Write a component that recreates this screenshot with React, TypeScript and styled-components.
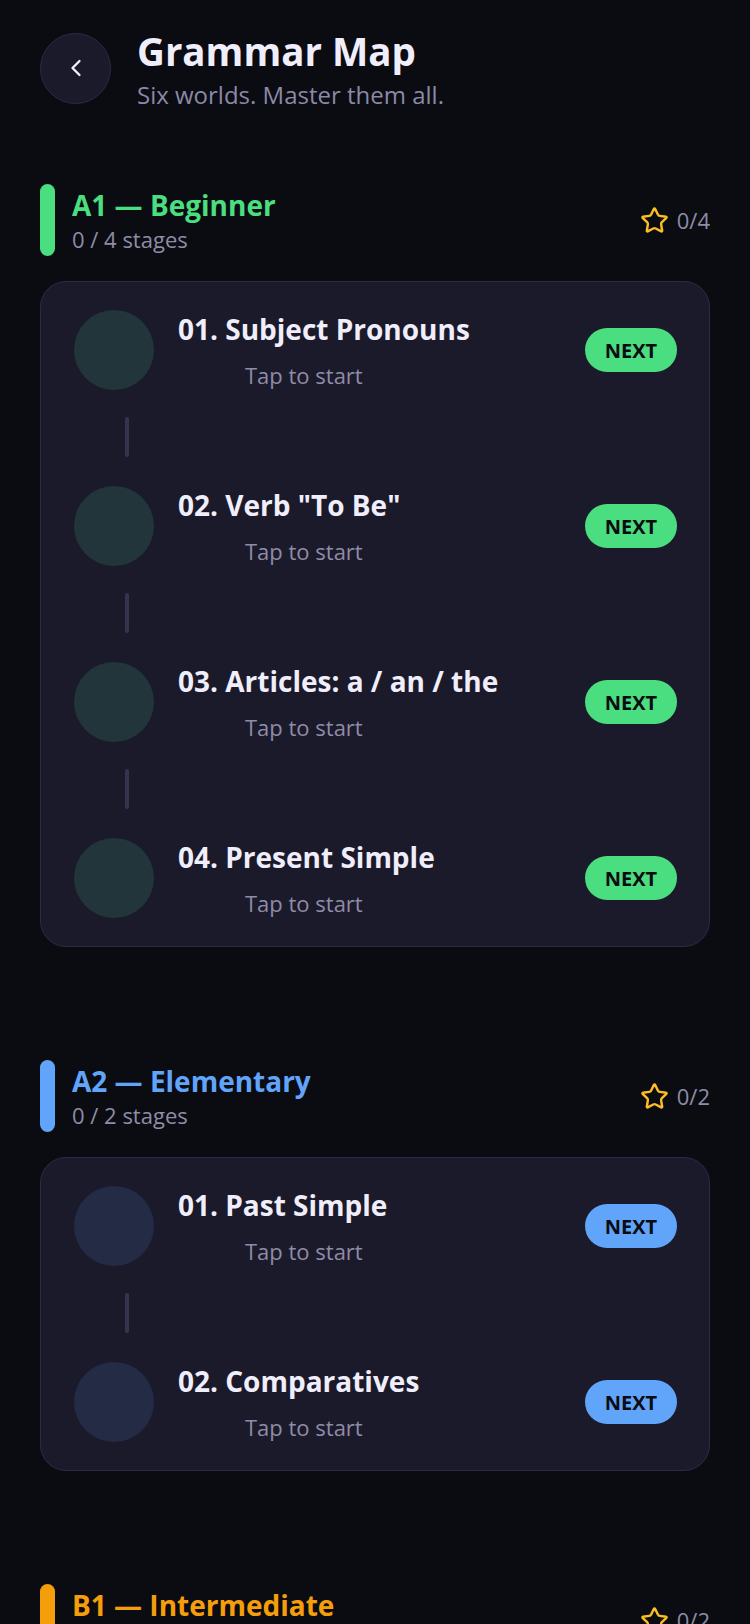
import React from "react";
import styled, { createGlobalStyle } from "styled-components";
import { ChevronLeft, Star } from "lucide-react";

const GlobalStyle = createGlobalStyle`
  * {
    box-sizing: border-box;
  }

  body {
    margin: 0;
    background-color: #0b0b12;
    font-family: "Open Sans", "Noto Sans", sans-serif;
    color: #f0eefa;
  }
`;

const Page = styled.div`
  min-height: 1624px;
  padding: 25px 40px 40px;
  background-color: #0b0b12;
`;

const Header = styled.header`
  display: flex;
  align-items: center;
  gap: 26px;
`;

const BackButton = styled.button`
  width: 71px;
  height: 71px;
  flex-shrink: 0;
  display: flex;
  align-items: center;
  justify-content: center;
  padding: 0;
  border: 1px solid #2c2b44;
  border-radius: 50%;
  background-color: #1b1a2b;
  color: #f0eefa;
  cursor: pointer;
`;

const HeaderText = styled.div`
  display: flex;
  flex-direction: column;
`;

const Title = styled.h1`
  margin: 0;
  font-size: 38.5px;
  font-weight: 700;
  line-height: 52px;
  color: #f0eefa;
`;

const Subtitle = styled.p`
  margin: 1px 0 0;
  font-size: 24px;
  line-height: 33px;
  color: #8a89a6;
`;

/* 레벨 섹션 */
const Section = styled.section`
  margin-top: 73px;

  & + & {
    margin-top: 113px;
  }
`;

const SectionHead = styled.div`
  display: flex;
  align-items: center;
  justify-content: space-between;
  height: 72px;
`;

const HeadLeft = styled.div`
  display: flex;
  align-items: center;
`;

const LevelBar = styled.div<{ $color: string }>`
  width: 15px;
  height: 72px;
  border-radius: 8px;
  background-color: ${(p) => p.$color};
`;

const LevelText = styled.div`
  margin-left: 17px;
`;

const LevelTitle = styled.h2<{ $color: string }>`
  margin: 0;
  font-size: 28px;
  font-weight: 700;
  line-height: 38px;
  color: ${(p) => p.$color};
`;

const LevelCount = styled.div`
  font-size: 22px;
  line-height: 30px;
  color: #8e8ca6;
`;

const StarScore = styled.div`
  display: flex;
  align-items: center;
  gap: 8px;
  font-size: 22px;
  color: #8e8ca6;
`;

const Card = styled.div`
  margin-top: 25px;
  padding: 28px 32px 28px 33px;
  border: 1px solid #2c2b44;
  border-radius: 26px;
  background-color: #1b1a2b;
`;

const StageRow = styled.div`
  display: flex;
  align-items: center;
  height: 80px;
`;

const Node = styled.div<{ $tint: string }>`
  width: 80px;
  height: 80px;
  flex-shrink: 0;
  border-radius: 50%;
  background-color: ${(p) => p.$tint};
`;

const StageText = styled.div`
  margin-left: 24px;
  flex: 1;
`;

const StageTitle = styled.div`
  font-size: 28px;
  font-weight: 700;
  line-height: 38px;
  color: #f0eefa;
`;

const StageHint = styled.div`
  margin-top: 12px;
  margin-left: 67px;
  font-size: 22px;
  line-height: 30px;
  color: #8e8ca6;
`;

const NextBadge = styled.span<{ $color: string }>`
  display: inline-flex;
  align-items: center;
  justify-content: center;
  width: 92px;
  height: 44px;
  flex-shrink: 0;
  border-radius: 22px;
  background-color: ${(p) => p.$color};
  color: #0b0b12;
  font-size: 20px;
  font-weight: 700;
`;

const Connector = styled.div`
  height: 96px;
  padding: 27px 0 0 51px;

  &::before {
    content: "";
    display: block;
    width: 4px;
    height: 40px;
    border-radius: 2px;
    background-color: #35344e;
  }
`;

type Level = {
  title: string;
  color: string;
  tint: string;
  stages: string[];
};

const levels: Level[] = [
  {
    title: "A1 — Beginner",
    color: "#4ade80",
    tint: "#22353a",
    stages: [
      "01. Subject Pronouns",
      '02. Verb "To Be"',
      "03. Articles: a / an / the",
      "04. Present Simple",
    ],
  },
  {
    title: "A2 — Elementary",
    color: "#60a5fa",
    tint: "#232b45",
    stages: ["01. Past Simple", "02. Comparatives"],
  },
  {
    title: "B1 — Intermediate",
    color: "#f59e0b",
    tint: "#3a2f24",
    stages: ["01. Present Perfect", "02. Future Forms"],
  },
];

const App: React.FC = () => {
  return (
    <Page>
      <GlobalStyle />
      <Header>
        <BackButton aria-label="Back">
          <ChevronLeft size={28} strokeWidth={2} />
        </BackButton>
        <HeaderText>
          <Title>Grammar Map</Title>
          <Subtitle>Six worlds. Master them all.</Subtitle>
        </HeaderText>
      </Header>

      {levels.map((level) => (
        <Section key={level.title}>
          <SectionHead>
            <HeadLeft>
              <LevelBar $color={level.color} />
              <LevelText>
                <LevelTitle $color={level.color}>{level.title}</LevelTitle>
                <LevelCount>0 / {level.stages.length} stages</LevelCount>
              </LevelText>
            </HeadLeft>
            <StarScore>
              <Star size={29} color="#fbbf24" strokeWidth={2} />
              0/{level.stages.length}
            </StarScore>
          </SectionHead>
          <Card>
            {level.stages.map((stage, i) => (
              <React.Fragment key={stage}>
                {i > 0 && <Connector />}
                <StageRow>
                  <Node $tint={level.tint} />
                  <StageText>
                    <StageTitle>{stage}</StageTitle>
                    <StageHint>Tap to start</StageHint>
                  </StageText>
                  <NextBadge $color={level.color}>NEXT</NextBadge>
                </StageRow>
              </React.Fragment>
            ))}
          </Card>
        </Section>
      ))}
    </Page>
  );
};

export default App;
